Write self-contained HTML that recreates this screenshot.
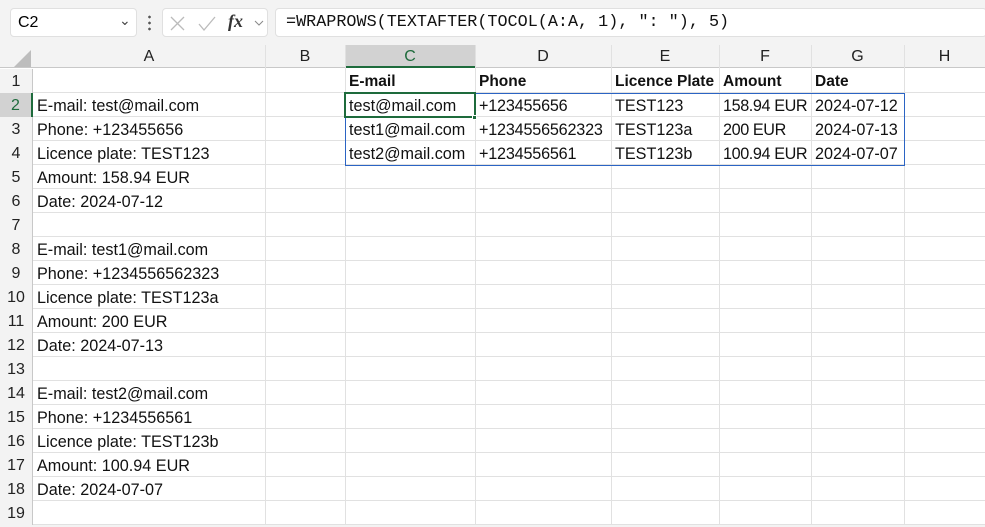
<!DOCTYPE html><html><head><style>
*{margin:0;padding:0;box-sizing:border-box}
body{width:985px;height:525px;overflow:hidden;background:#f3f3f3;font-family:"Liberation Sans",sans-serif;position:relative}
.box{position:absolute;background:#fff;border:1px solid #e0e0e0;border-radius:4px}
.grid{position:absolute;left:0;top:45px;width:985px;height:480px;background:#fff}
.v{position:absolute;top:0;width:1px;height:480px;background:#e1e1e1}
.h{position:absolute;left:0;height:1px;width:985px;background:#e1e1e1}
.ch{position:absolute;top:0;height:23px;background:#f3f3f3;border-bottom:1px solid #c8c8c8;text-align:center;font-size:16px;line-height:24px;color:#222}
.rh{position:absolute;left:0;width:33px;background:#f3f3f3;text-align:center;font-size:16px;color:#222;height:24px;line-height:26px;border-right:1px solid #c8c8c8}
.t{position:absolute;font-size:16.2px;line-height:26px;color:#111;white-space:nowrap}
b.t{font-weight:bold;font-size:15.5px}
</style></head><body>
<div class="box" style="left:10px;top:8px;width:127px;height:29px"><span style="position:absolute;left:7px;top:5px;font-size:16px">C2</span><span style="position:absolute;left:108px;top:3px;font-size:14px;color:#444">&#8964;</span></div>
<div style="position:absolute;left:148px;top:14px;width:3px;height:17px;background:radial-gradient(circle,#555 1.2px,transparent 1.5px) 0 0/3px 6px"></div>
<div class="box" style="left:162px;top:8px;width:106px;height:29px">
<svg width="106" height="29" style="position:absolute;left:0;top:0"><path d="M8 8l13 13M21 8L8 21" stroke="#bbb" stroke-width="1.3" fill="none"/><path d="M36 15l5 6 11-13" stroke="#bbb" stroke-width="1.3" fill="none"/><path d="M92 12l4 4 4-4" stroke="#888" fill="none"/></svg>
<span style="position:absolute;left:65px;top:2px;font-size:18px;font-style:italic;font-family:'Liberation Serif',serif;font-weight:bold;color:#333">fx</span></div>
<div class="box" style="left:275px;top:8px;width:712px;height:29px"><span style="position:absolute;left:10px;top:4px;font-family:'Liberation Mono',monospace;font-size:16.8px;color:#111">=WRAPROWS(TEXTAFTER(TOCOL(A:A, 1), ": "), 5)</span></div>
<div class="grid">
<div class="ch" style="left:0;width:33px"></div>
<svg style="position:absolute;left:14px;top:5px" width="17" height="17"><path d="M17 0V17H0Z" fill="#bdbdbd"/></svg>
<div class="ch" style="left:33px;width:232px">A</div>
<div class="ch" style="left:265px;width:80px">B</div>
<div class="ch" style="left:345px;width:130px;background:#d2d2d2;color:#1e6b3c;border-bottom:2px solid #1e6b3c">C</div>
<div class="ch" style="left:475px;width:136px">D</div>
<div class="ch" style="left:611px;width:108px">E</div>
<div class="ch" style="left:719px;width:92px">F</div>
<div class="ch" style="left:811px;width:93px">G</div>
<div class="ch" style="left:904px;width:81px">H</div>
<div class="v" style="left:265px"></div><div class="v" style="left:345px"></div><div class="v" style="left:475px"></div><div class="v" style="left:611px"></div><div class="v" style="left:719px"></div><div class="v" style="left:811px"></div><div class="v" style="left:904px"></div>
</div>
<script>
var g=document.querySelector('.grid'),h='';
var A={2:"E-mail: test@mail.com",3:"Phone: +123455656",4:"Licence plate: TEST123",5:"Amount: 158.94 EUR",6:"Date: 2024-07-12",8:"E-mail: test1@mail.com",9:"Phone: +1234556562323",10:"Licence plate: TEST123a",11:"Amount: 200 EUR",12:"Date: 2024-07-13",14:"E-mail: test2@mail.com",15:"Phone: +1234556561",16:"Licence plate: TEST123b",17:"Amount: 100.94 EUR",18:"Date: 2024-07-07"};
for(var r=1;r<=19;r++){var y=24+(r-1)*24;
h+='<div class="h" style="top:'+(y+23)+'px"></div>';
h+='<div class="rh" style="top:'+y+'px;'+(r==2?'background:#d2d2d2;color:#1e6b3c;border-right:2px solid #1e6b3c':'')+'">'+r+'</div>';
if(A[r])h+='<div class="t" style="left:37px;top:'+y+'px">'+A[r]+'</div>';}
var cols=[349,479,615,723,815];
var hd=["E-mail","Phone","Licence Plate","Amount","Date"];
var d=[["test@mail.com","+123455656","TEST123","158.94 EUR","2024-07-12"],["test1@mail.com","+1234556562323","TEST123a","200 EUR","2024-07-13"],["test2@mail.com","+1234556561","TEST123b","100.94 EUR","2024-07-07"]];
for(var i=0;i<5;i++){h+='<b class="t" style="left:'+cols[i]+'px;top:24px">'+hd[i]+'</b>';
for(var j=0;j<3;j++)h+='<div class="t" style="left:'+cols[i]+'px;top:'+(48+j*24)+'px;'+(i==1?'letter-spacing:-0.2px':'')+(i==3?'letter-spacing:-0.4px':'')+'">'+d[j][i]+'</div>';}
h+='<div style="position:absolute;left:345px;top:48px;width:560px;height:73px;border:1px solid #2b64c4"></div>';
h+='<div style="position:absolute;left:344px;top:47px;width:132px;height:26px;border:2px solid #1e6b3c"></div>';
h+='<div style="position:absolute;left:472px;top:70px;width:5px;height:5px;background:#1e6b3c;border:1px solid #fff"></div>';
g.insertAdjacentHTML('beforeend',h);
</script>
</body></html>
